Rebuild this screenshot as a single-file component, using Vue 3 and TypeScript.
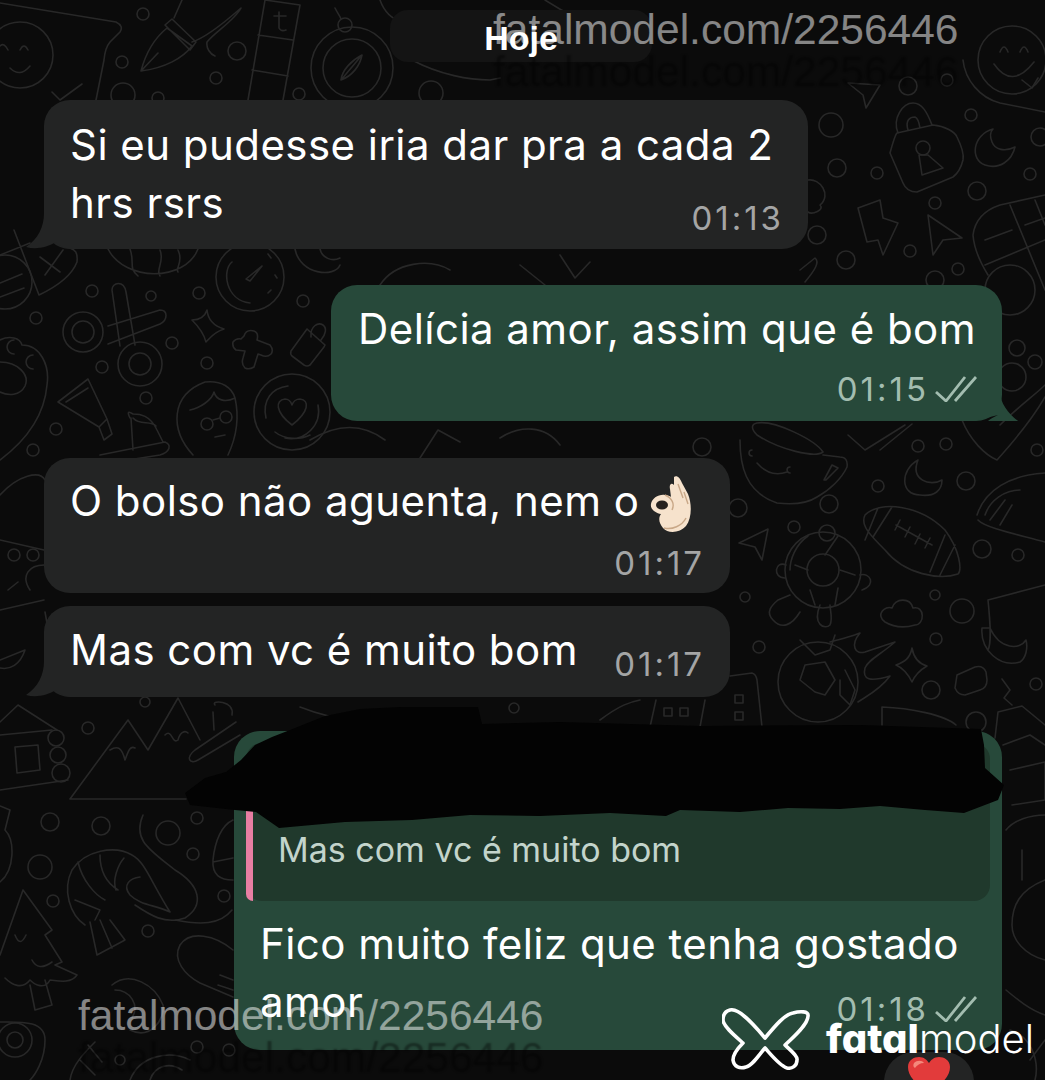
<script setup lang="ts">
// wallpaper doodles, in page pixels
const rings: [number, number, number][] = [
  [143, 14, 6], [122, 62, 6], [237, 51, 9], [216, 78, 6], [123, 95, 12], [158, 98, 6], [299, 94, 6], [431, 93, 12],
  [92, 291, 6], [151, 296, 5], [36, 318, 6], [199, 293, 6], [172, 343, 6], [102, 367, 6], [207, 363, 6], [303, 301, 6],
  [146, 398, 6], [56, 429, 6], [33, 450, 6], [908, 86, 9], [947, 80, 6], [831, 125, 12], [837, 168, 9], [877, 173, 6],
  [971, 115, 6], [1030, 174, 6], [977, 191, 9], [935, 203, 6], [1040, 137, 9], [817, 235, 9], [846, 260, 9], [910, 251, 6],
  [958, 269, 6], [935, 280, 9], [1017, 348, 8], [1035, 362, 7], [1012, 377, 14], [702, 447, 9], [918, 446, 6], [946, 444, 6],
  [1037, 450, 6], [878, 486, 6], [966, 481, 9], [738, 508, 9], [829, 504, 9], [794, 527, 6], [982, 549, 9], [1018, 555, 6],
  [745, 597, 5], [935, 595, 5], [962, 611, 12], [759, 647, 6], [936, 639, 6], [931, 690, 9], [1036, 684, 6], [976, 722, 10],
  [88, 728, 6], [145, 702, 5], [50, 822, 9], [101, 826, 9], [168, 833, 12], [197, 818, 6], [193, 854, 6], [40, 867, 12],
  [53, 901, 6], [224, 896, 6], [148, 931, 6], [197, 1047, 6], [229, 1050, 6], [120, 1060, 5], [514, 708, 5], [14, 555, 6],
  [33, 555, 6], [20, 55, 33], [352, 68, 41], [352, 68, 29], [345, 25, 7], [83, 332, 20], [83, 332, 11], [140, 364, 22],
  [140, 364, 11], [5, 282, 27], [250, 277, 34], [292, 412, 38], [207, 424, 6], [226, 417, 6], [56, 738, 8], [58, 755, 8],
  [61, 773, 9], [15, 1040, 17], [15, 1040, 8], [823, 570, 38], [823, 570, 16], [827, 533, 8], [818, 682, 40], [1012, 60, 34],
  [923, 148, 7], [1010, 290, 25],
];

const paths: string[] = [
  // top row
  "M0 3 L116 22 Q124 26 120 32 L110 42 Q105 48 104 60 L96 100 M52 92 L60 100 L82 84 M8 50 Q4 42 0 46 M28 50 Q24 42 20 50 M10 68 Q20 78 30 66",
  "M141 71 C146 52 156 37 167 28 L192 46 C183 58 165 68 141 71Z M165 25 L172 19 L196 42 L190 50Z M174 18 L182 0 M192 42 C205 38 225 22 241 8 C235 20 215 32 207 42 C206 48 210 54 215 56 M141 71 L158 53",
  "M265 0 L300 5 L283 100 M248 100 L265 0 M258 35 L293 40 M252 70 L288 76 M279 12 L279 28 Q281 32 286 30 M274 16 L286 16",
  "M362 55 C352 60 342 70 341 80 C352 76 360 66 362 55Z M341 80 L362 55 M335 8 C338 14 340 16 341 19 M380 0 C385 14 395 20 402 22",
  "M412 60 C440 75 470 80 490 80 L500 78 M545 0 C560 10 580 22 640 40",
  "M963 60 C965 80 980 98 1000 103 L1045 112 M1000 52 Q1004 42 1008 52 M1020 52 Q1024 42 1028 52 M994 64 Q1012 90 1034 62 M1022 80 L1032 88 L1038 78",
  // left middle
  "M14 230 L39 295 M0 255 L30 243 M40 257 L60 272 M63 250 L45 275 M39 295 C60 285 72 275 77 262 C78 252 75 250 70 248 M0 283 L22 274 M0 297 L24 288",
  "M108 249 C125 282 185 282 198 249 M130 249 C135 262 128 268 138 276 M160 250 C165 262 155 270 160 276 M178 250 C184 262 175 268 178 272",
  "M295 249 C300 275 335 278 340 265 M320 249 C322 258 332 262 340 258",
  "M246 279 L262 266 L250 281Z M250 303 C225 300 222 270 232 262 M268 254 L271 258 M275 275 L277 278 M271 290 L268 293",
  "M108 326 L160 310 C168 310 168 320 160 324 L108 344 M112 290 C112 282 124 280 126 292 L135 345 M112 290 L120 346",
  "M207 310 C208 320 214 326 224 329 C214 332 210 338 206 342 C204 334 200 328 192 320 C200 320 205 316 207 310Z",
  "M244 336 Q246 329 254 331 Q259 333 257 340 L270 345 Q274 350 271 354 Q267 358 261 355 L258 354 L254 367 Q249 370 245 368 Q241 364 243 358 L245 351 L236 350 Q232 347 233 342 Q236 338 241 339Z",
  "M291 351 L307 329 L325 345 L324 347 L310 365 Q307 367 304 365 L292 356 Q290 354 291 351Z M311 337 C310 326 318 322 323 325 C327 328 326 334 321 340",
  "M292 425 C275 412 275 400 285 399 C289 399 291 402 292 405 C293 402 296 399 300 399 C310 400 309 412 292 425Z M266 418 C262 400 272 388 288 386 M318 405 C322 425 305 442 285 438 M275 432 C285 440 300 440 310 435",
  "M193 455 C170 430 170 395 205 382 C222 380 232 388 235 398 C240 420 235 440 228 455 M190 410 C200 408 212 400 214 392 C216 400 225 403 235 398 M213 420 L220 418 M215 437 L225 435",
  "M58 402 L88 379 L107 419 L99 427 Z M66 402 L88 388 M99 427 L104 440 L112 434 L107 419",
  "M130 418 C126 410 130 412 133 414 C140 414 150 415 157 430 L163 442 M131 418 L133 450 M133 418 C140 426 150 420 156 426 M100 455 L165 442 C172 445 170 452 160 455 L128 460",
  "M0 340 C10 335 20 338 22 345 C40 345 50 365 47 385 C44 420 20 445 0 460 M0 362 C18 362 30 375 25 386 C20 396 8 396 0 392 M14 340 A7 7 0 1 0 14.1 354 M33 355 A7 7 0 1 0 33.1 369",
  // left lower
  "M0 722 L18 705 L57 730 M0 735 L52 730 M0 790 L68 780 M15 747 L38 745 L40 770 L17 773Z",
  "M70 799 L128 720 L148 750 L178 698 L200 740 M70 799 L186 799 M110 750 C118 745 122 748 125 760 C128 752 130 745 135 748 M165 735 C172 728 172 745 178 740 C180 732 185 730 188 733",
  "M215 705 C210 700 235 700 232 715 M213 712 L214 730 M236 722 L195 750 C185 758 190 765 198 760 L240 735",
  "M85 925 C70 915 62 890 72 870 C85 850 115 845 132 855 C145 862 150 880 170 912 C155 905 140 905 130 895 C122 885 130 878 140 877 M78 862 C82 880 95 895 105 900 M100 855 C100 875 110 885 118 890 M124 858 C118 865 112 880 116 890 M75 900 L100 910 L95 920 M90 922 L97 955 L125 940 L110 920 M100 920 L112 948",
  "M143 815 C132 840 150 850 175 870 C200 885 205 905 185 918 C165 925 150 915 135 905 M175 920 C200 925 220 925 232 910",
  "M23 890 L0 955 M23 890 L52 930 L45 935 L62 962 L55 965 L77 975 C70 985 55 980 50 980 C45 990 35 985 30 980 C22 990 12 985 5 978 M30 985 L35 1010 L52 1005 L45 980 M15 935 Q20 948 26 935 M32 960 Q38 972 52 962",
  "M0 806 L10 810 L5 830 C15 840 15 870 0 882",
  "M233 820 C222 825 215 840 213 860 C212 875 220 880 233 880 M213 862 L233 858",
  "M233 950 C215 935 190 930 180 945 C172 960 185 975 200 983 L233 997 M220 975 L233 980 M218 985 L233 990",
  "M0 1022 C20 1022 45 1020 45 1040 C45 1060 35 1075 30 1080",
  "M112 985 C130 970 155 985 163 1005 C165 1020 150 1040 130 1030 M115 990 C130 990 140 1005 132 1018",
  "M130 1080 C140 1055 170 1050 190 1060 M150 1080 C155 1065 170 1062 182 1070 M70 1080 C72 1065 85 1052 95 1042 M88 1045 L102 1062 M80 1060 L95 1075",
  // band under first bubble and beside the reply
  "M380 285 C395 262 430 258 450 270 M520 265 L545 285 M560 255 L575 278 L590 262",
  "M300 707 C320 715 345 720 362 722 M600 720 C620 705 630 702 640 700",
  "M0 495 C18 475 40 470 45 480 M0 540 L44 550 M0 610 L44 600 M45 612 L50 640 M0 660 L25 650 C20 665 10 670 0 668 M8 590 L18 582 M30 590 C20 575 30 565 44 565",
  "M310 440 C340 422 365 425 385 440 M420 458 L438 430 L460 442 M500 438 C520 425 545 425 560 445",
  // right middle
  "M848 83 L880 85 L866 108 L863 95Z",
  "M890 153 C893 142 895 135 897 133 L933 125 C945 126 955 132 957 137 C962 147 964 155 963 160 C961 168 957 174 953 177 L917 192 C910 192 905 188 903 183Z M898 133 C892 118 903 103 913 103 C922 103 927 112 932 125 M908 130 C905 120 910 117 915 117 C918 118 919 122 920 128 M922 175 L943 168 L928 155 L919 155Z",
  "M993 129 C972 135 970 160 985 165 C1000 170 1012 160 1015 147 C1005 152 995 150 992 142 C990 137 990 132 993 129Z",
  "M808 180 C820 178 832 195 820 205 C825 210 812 215 808 212",
  "M858 208 L880 200 L883 218 L898 223 L883 255 L878 240 L867 242Z",
  "M928 215 L962 238 L943 240 L933 255Z",
  "M973 235 C975 220 985 210 1000 205 L1045 195 M1010 205 L1045 290 M1035 200 L1045 225 M985 265 L1045 240 M985 240 L1012 230 M1025 225 L1045 218 M973 235 C974 250 980 262 988 275",
  "M800 270 L815 258 C820 262 815 270 805 282",
  "M1000 425 C1020 405 1035 395 1045 385 M962 420 C970 440 985 455 997 460 C1015 440 1032 420 1045 397",
  // cup, check, moon, football, taco
  "M740 440 C740 465 745 492 777 503 C795 505 808 503 817 497 C830 490 842 478 847 467 C848 460 845 457 840 457 L823 455 M757 423 C775 420 815 440 823 452 C815 458 780 450 757 435 C750 428 752 424 757 423Z M757 463 Q770 478 787 472 M824 480 L832 465 L838 468 L826 480Z M752 450 A3 3 0 1 0 752.1 456 M790 467 A3 3 0 1 0 790.1 473",
  "M848 435 L865 450 L905 425 M880 450 L912 424",
  "M918 460 C900 470 900 495 920 495 C935 497 942 490 942 480 C930 487 910 480 918 460Z",
  "M865 515 C880 500 920 505 945 530 C960 550 962 570 958 574 C940 580 905 575 885 550 C870 535 860 525 865 515Z M878 508 L865 540 M892 507 L873 537 M930 572 L945 535 M940 575 L955 545 M896 525 L932 545 M900 520 L895 530 M910 527 L905 537 M920 534 L915 544 M930 538 L925 548",
  "M977 515 C985 490 1010 475 1045 473 M978 520 C985 528 1020 535 1045 542 M985 515 C990 500 1005 490 1020 490 M990 520 L1005 500 M1000 525 L1012 505",
  "M739 543 L768 529 L762 560 L755 547Z",
  "M808 536 C795 545 790 560 790 570 M838 536 L825 555 M795 565 L808 570 M840 570 L855 575 M810 590 L815 605 M838 588 L835 605 M786 565 C775 560 772 578 785 578 M860 575 C870 572 877 585 862 590",
  // lower right
  "M773 620 C765 612 772 605 778 600 L790 595 M773 620 C782 630 792 625 800 612 M820 605 C812 625 825 630 830 625 C833 618 830 610 830 605",
  "M800 640 L815 655 L830 650 L835 635 M815 692 L800 680 L805 665 L825 662 L835 680 L825 695Z M845 670 L855 690 L850 705 L840 695 L840 680",
  "M830 642 C845 638 855 635 860 633 C850 645 855 655 865 652 L895 642 C880 655 868 660 865 668 C862 680 870 682 890 676 C880 690 865 697 858 702",
  "M885 622 C875 615 885 605 892 608 C895 598 910 597 913 608 C925 605 925 625 915 625 C905 628 895 628 885 622Z",
  "M912 648 C914 660 920 664 927 666 C920 670 915 675 912 682 C908 674 903 668 896 665 C905 662 910 658 912 648Z",
  "M982 628 C980 650 1000 668 1020 662 C1026 658 1028 648 1026 640 C1020 650 1000 650 990 628Z M988 650 C992 642 990 620 988 600 L1045 585",
  "M957 675 L975 667 Q983 665 986 672 L987 680 Q987 688 980 690 L965 695 Q958 695 955 688 Z",
  "M1002 679 L1010 690 L1004 698 L1012 705",
  "M882 725 L882 707 C910 708 945 715 956 725",
  "M995 738 L998 712 L1022 706 L1045 725",
  "M730 676 L752 673 Q756 674 757 680 L762 727 M735 695 L743 695 L743 703 L735 703Z M735 712 L743 712 L743 720 L735 720Z M650 727 L656 700 M700 727 L705 700 M664 708 L672 708 L672 716 L664 716Z M680 708 L688 708 L688 716 L680 716Z",
  "M1003 745 L1030 735 L1045 745 M1010 770 L1045 762 L1045 800 L1012 805 M1045 880 C1020 890 1012 905 1012 925 C1012 940 1025 955 1045 960 M1006 990 C1018 1000 1030 1010 1045 1015 M1030 1060 L1045 1040",
  "M1006 830 C1014 820 1030 815 1045 815 M1022 850 L1022 880 M1010 1030 C1030 1035 1040 1060 1035 1080",
];
</script>

<template>
  <div class="screen">
    <svg class="wallpaper" viewBox="0 0 1045 1080" fill="none" stroke="#282828" stroke-width="1.6">
      <circle v-for="(r, i) in rings" :key="i" :cx="r[0]" :cy="r[1]" :r="r[2]" />
      <path v-for="(d, i) in paths" :key="'p' + i" :d="d" stroke-linejoin="round" stroke-linecap="round" />
    </svg>

    <div class="thread">
      <div class="day">Hoje</div>

      <div class="bubble in tail first">
        <p class="text">Si eu pudesse iria dar pra a cada 2<br />hrs rsrs</p>
        <div class="meta over"><span>01:13</span></div>
      </div>

      <div class="bubble out tail second">
        <p class="text">Delícia amor, assim que é bom</p>
        <div class="meta">
          <span>01:15</span>
          <svg class="ticks" viewBox="0 0 42 26" fill="none" stroke="currentColor" stroke-width="2.8">
            <path d="M1 16 L11 25 L30 1 M20 25 L41 1" />
          </svg>
        </div>
      </div>

      <div class="bubble in third">
        <p class="text">
          O bolso não aguenta, nem o<svg class="emoji" viewBox="0 0 42 56">
            <path fill="#f6e2cc" d="M24 1 C27 -1 30 2 32 7 L38 18 C42 28 42 42 36 50 C30 57 18 58 13 52 C9 47 8 42 11 38 C5 37 0 33 1 28 C2 22 9 18 15 19 C18 19 20 20 21 21 L20 13 C19 9 21 6 24 9 Z" />
            <ellipse cx="12" cy="29" rx="6" ry="4.5" fill="#26221f" />
            <path fill="none" stroke="#c9a888" stroke-width="1.4" d="M28 8 L33 22 M34 16 L38 28 M15 19 C22 22 25 28 22 34 M14 52 C22 54 32 50 36 42" />
          </svg>
        </p>
        <div class="meta"><span>01:17</span></div>
      </div>

      <div class="bubble in tail fourth">
        <p class="text">Mas com vc é muito bom</p>
        <span class="time-side">01:17</span>
      </div>

      <div class="bubble out fifth">
        <div class="quote">
          <span class="quote-text">Mas com vc é muito bom</span>
        </div>
        <p class="text">Fico muito feliz que tenha gostado<br />amor</p>
        <div class="meta over">
          <span>01:18</span>
          <svg class="ticks" viewBox="0 0 42 26" fill="none" stroke="currentColor" stroke-width="2.8">
            <path d="M1 16 L11 25 L30 1 M20 25 L41 1" />
          </svg>
        </div>
      </div>
    </div>

    <!-- black marker over the sender name -->
    <svg class="scribble" viewBox="0 0 1045 1080">
      <path fill="#030303" d="M185 793 L205 778 L226 772 L241 760 L255 745 L272 737 L290 730 L325 716 L360 709 L401 707 L478 707 L482 724 L560 722 L700 726 L860 725 L981 729 L984 745 L985 768 L1004 785 L998 800 L964 813 L925 810 L880 806 L840 809 L788 808 L740 812 L680 810 L666 816 L610 813 L540 816 L470 815 L412 820 L345 822 L279 828 L256 812 L235 810 L190 805 Z" />
    </svg>

    <div class="reaction">
      <svg class="heart" viewBox="0 0 42 36">
        <path fill="#e23b3b" d="M21 36 C6 26 0 18 0 10 C0 3 6 0 11 0 C16 0 19 3 21 6 C23 3 26 0 31 0 C36 0 42 3 42 10 C42 18 36 26 21 36Z" />
        <path fill="#f4897c" d="M6 6 C9 3 14 3 16 6 C12 6 9 8 7 11 C5 10 5 8 6 6Z" />
      </svg>
    </div>

    <div class="mark mark-top">fatalmodel.com/2256446</div>
    <div class="mark mark-bottom">fatalmodel.com/2256446</div>

    <div class="brand">
      <svg class="brand-icon" viewBox="722 1008 88 62" fill="none" stroke="#fff" stroke-width="3.6" stroke-linejoin="round">
        <path d="M730 1010 C738 1008 750 1020 765 1038 C775 1026 785 1014 793 1013 C800 1011 809 1011 808 1016 C808 1024 795 1036 785 1045 C790 1050 798 1056 797 1060 C797 1066 792 1069 787 1068 C780 1066 772 1056 765 1048 C758 1056 752 1066 746 1067 C740 1069 734 1067 733 1060 C733 1054 738 1048 743 1043 C735 1036 723 1026 723 1020 C723 1014 726 1011 730 1010Z" />
      </svg>
      <span class="brand-name"><b>fatal</b>model</span>
    </div>
  </div>
</template>

<style>
html,
body {
  margin: 0;
  background: #0b0b0b;
}
</style>

<style scoped>
.screen {
  position: relative;
  width: 1045px;
  height: 1080px;
  overflow: hidden;
  background: #0b0b0b;
  font-family: Inter, "Liberation Sans", sans-serif;
}

.wallpaper,
.scribble {
  position: absolute;
  left: 0;
  top: 0;
  width: 1045px;
  height: 1080px;
}

.wallpaper {
  filter: blur(0.4px);
}

.thread {
  position: relative;
  display: flex;
  flex-direction: column;
  padding-top: 10px;
}

.day {
  align-self: flex-start;
  box-sizing: border-box;
  width: 262px;
  height: 52px;
  margin-left: 390px;
  border-radius: 18px;
  background: #141414;
  color: #fff;
  font-family: "Liberation Sans", sans-serif;
  font-size: 34px;
  font-weight: 700;
  line-height: 56px;
  text-align: center;
}

.bubble {
  position: relative;
  box-sizing: border-box;
  border-radius: 26px;
  color: #fff;
}

.in {
  background: #232424;
  --tint: #232424;
  margin-left: 44px;
}

.out {
  background: #27493a;
  --tint: #27493a;
  margin-left: auto;
  margin-right: 43px;
}

.tail.in::before {
  content: "";
  position: absolute;
  left: -18px;
  bottom: 0;
  width: 44px;
  height: 36px;
  background: var(--tint);
  clip-path: path("M18 0 C18 14 12 26 0 34 C10 37 22 34 30 29 C34 33 38 35 44 36 L44 0Z");
}

.tail.out::after {
  content: "";
  position: absolute;
  right: -16px;
  bottom: 0;
  width: 44px;
  height: 30px;
  background: var(--tint);
  clip-path: path("M26 0 C26 12 34 22 44 30 L14 30 C16 28 20 26 24 24 L0 30 L0 0Z");
}

.first {
  width: 764px;
  height: 149px;
  margin-top: 38px;
  padding: 16px 27px 0 26px;
}

.second {
  width: 671px;
  height: 136px;
  margin-top: 36px;
  padding: 15px 25px 0 27px;
}

.third {
  width: 686px;
  height: 135px;
  margin-top: 37px;
  padding: 14px 28px 0 26px;
}

.fourth {
  display: flex;
  justify-content: space-between;
  width: 686px;
  height: 91px;
  margin-top: 13px;
  padding: 15px 28px 0 26px;
}

.fifth {
  width: 768px;
  height: 319px;
  margin-top: 34px;
  padding: 12px 12px 0;
}

.text {
  margin: 0;
  font-size: 42px;
  letter-spacing: 0.45px;
  line-height: 58px;
  white-space: nowrap;
}

.emoji {
  display: inline-block;
  width: 42px;
  height: 56px;
  margin-left: 11px;
  vertical-align: -16px;
}

.meta,
.time-side {
  color: #a4a5a5;
  font-size: 33px;
  line-height: 40px;
  letter-spacing: 3px;
}

.meta span,
.time-side {
  margin-right: -3px;
}

.meta {
  display: flex;
  justify-content: flex-end;
  align-items: center;
  gap: 9px;
  margin-top: 11px;
}

.meta.over {
  margin-top: -34px;
}

.out .meta {
  color: #a3bdb0;
}

.time-side {
  margin-top: 23px;
}

.ticks {
  width: 42px;
  height: 26px;
}

.quote {
  position: relative;
  box-sizing: border-box;
  height: 158px;
  padding: 87px 0 0 32px;
  border-radius: 16px;
  background: #20392c;
}

/* only the lower part of the bar shows below the marker */
.quote::before {
  content: "";
  position: absolute;
  left: 0;
  top: 68px;
  bottom: 0;
  width: 7px;
  border-bottom-left-radius: 14px;
  background: #e87ea3;
}

.quote-text {
  color: #c3d4cb;
  font-size: 34px;
  line-height: 40px;
}

.fifth .text {
  margin: 14px 0 0 14px;
}

.fifth .meta.over {
  margin: -42px 13px 0 0;
}

.reaction {
  position: absolute;
  left: 884px;
  top: 1052px;
  display: flex;
  justify-content: center;
  width: 90px;
  height: 60px;
  padding-top: 5px;
  border-radius: 30px;
  background: #232424;
}

.heart {
  width: 42px;
  height: 36px;
}

.mark {
  position: absolute;
  font-family: "Liberation Sans", sans-serif;
  font-size: 42.5px;
  line-height: 48px;
  white-space: nowrap;
  color: rgba(255, 255, 255, 0.5);
  text-shadow: 0 42px 2px rgba(0, 0, 0, 0.4);
}

.mark-top {
  left: 493px;
  top: 6px;
}

.mark-bottom {
  left: 78px;
  top: 992px;
}

.brand {
  position: absolute;
  left: 722px;
  top: 1008px;
  display: flex;
  align-items: center;
  gap: 16px;
  color: #fff;
}

.brand-icon {
  width: 88px;
  height: 62px;
}

.brand-name {
  font-size: 40px;
  font-weight: 300;
  line-height: 62px;
  font-feature-settings: "cv11";
}

.brand-name b {
  font-weight: 800;
}
</style>
